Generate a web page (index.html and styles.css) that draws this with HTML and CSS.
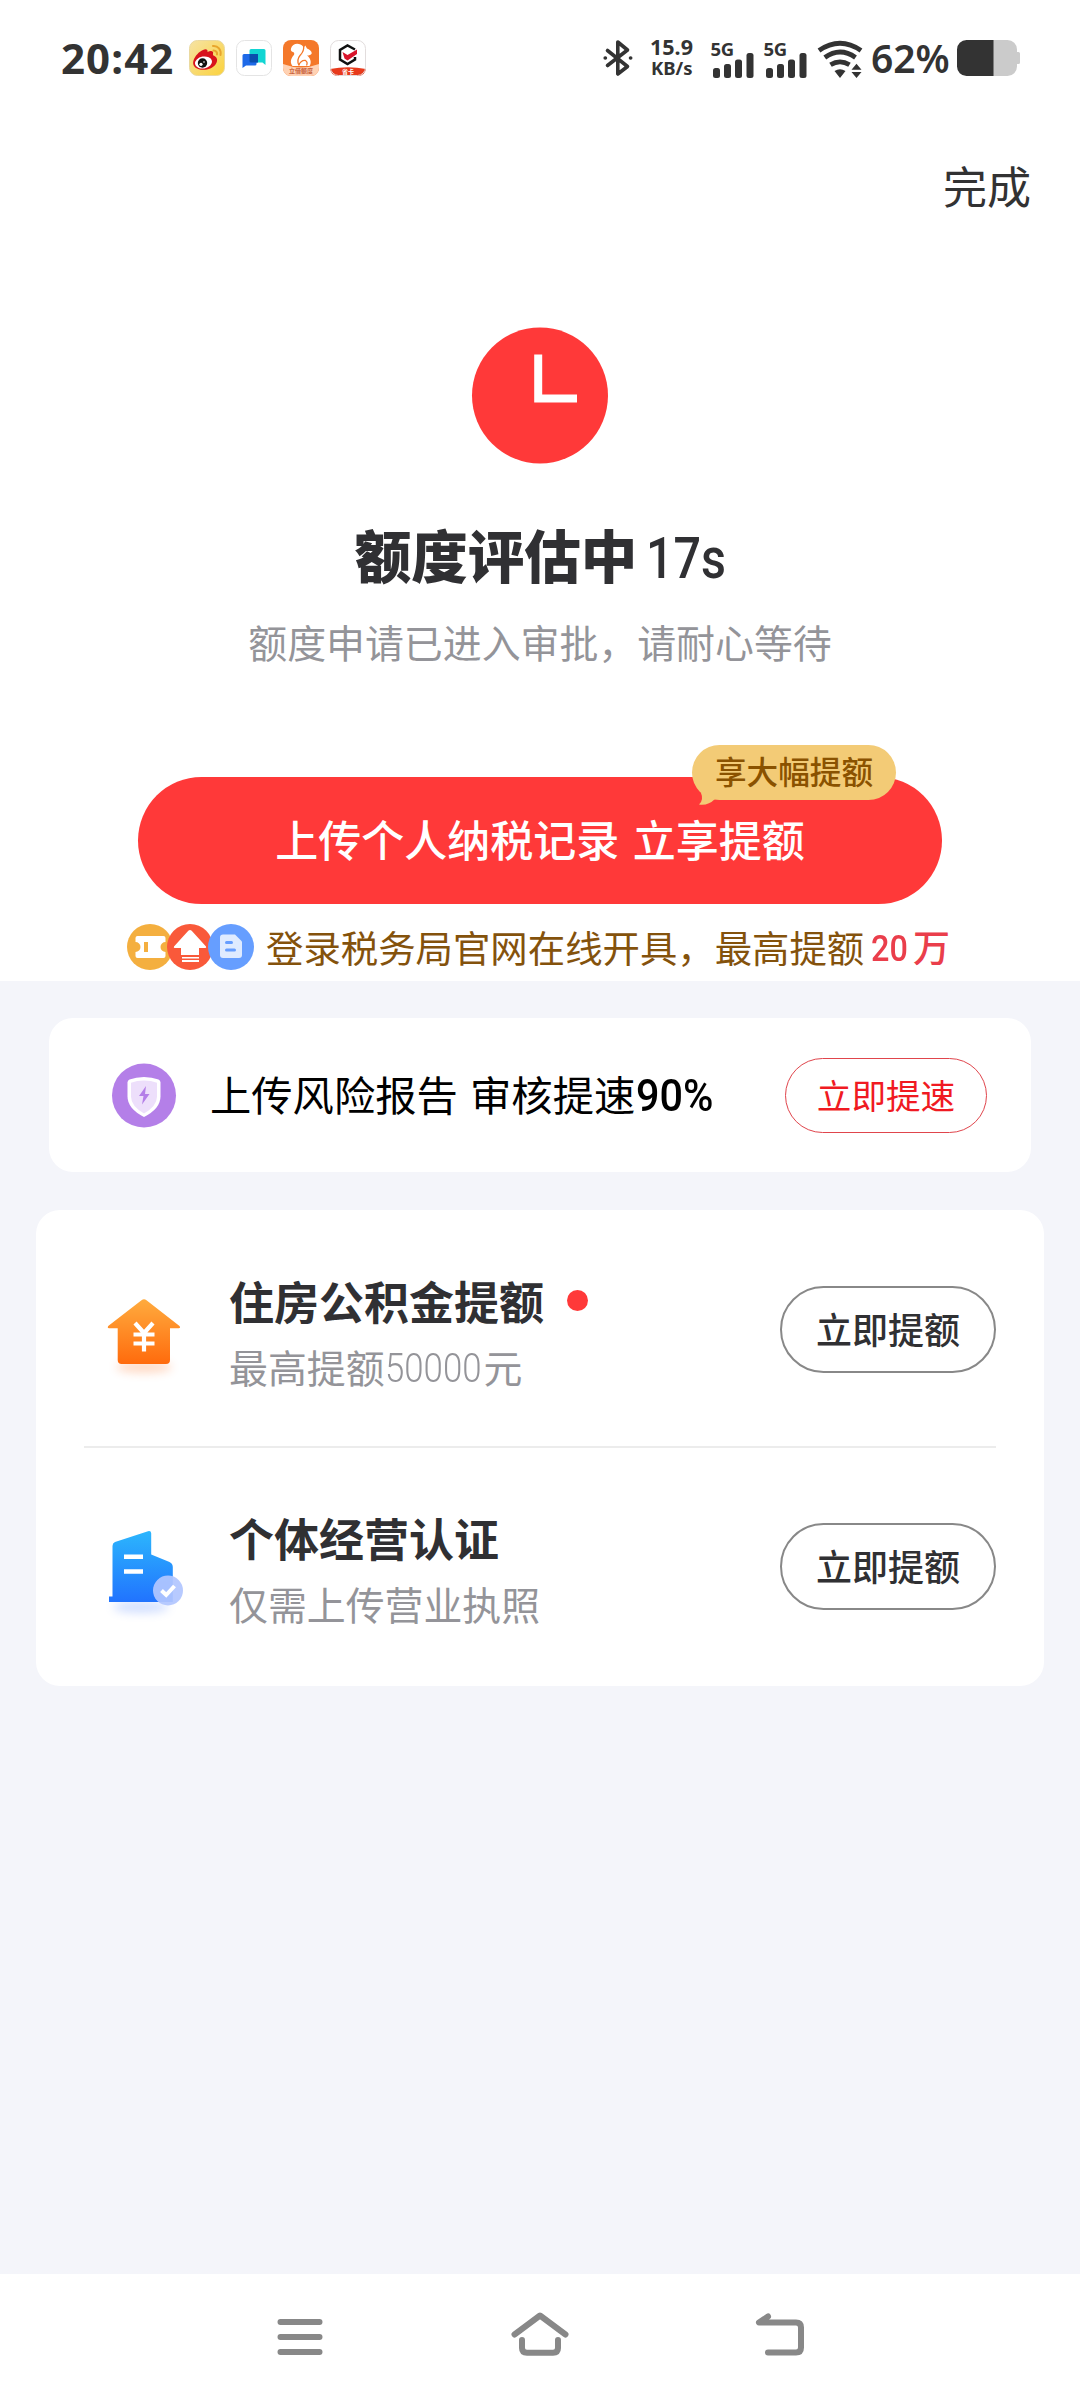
FILE: index.html
```html
<!DOCTYPE html>
<html lang="zh-CN">
<head>
<meta charset="utf-8">
<title>额度评估</title>
<link rel="stylesheet" href="styles.css">
</head>
<body>
<div class="screen">
  <header class="status">
    <div class="status-left">
      <span class="time">20:42</span>
      <svg class="app" viewBox="0 0 36 36">
        <defs><linearGradient id="wb" x1="0" y1="0" x2="1" y2="1"><stop offset="0" stop-color="#f6e3a4"/><stop offset="1" stop-color="#fbd23c"/></linearGradient></defs>
        <rect x=".5" y=".5" width="35" height="35" rx="8" fill="url(#wb)" stroke="#ead9a0"/>
        <path d="M14 10c3-1.500 5-.5 4.500 2 3-1.500 6.500-1.500 5.500 2-.3 1.200.5 1.500 1.500 2 3 1.500 3.500 5 1 8.500-3 4-9 6-14.500 5.200C6 29 3 25 4.500 20.500 6 16 10 11.500 14 10z" fill="#d8121c"/>
        <ellipse cx="14.500" cy="22.500" rx="8.600" ry="6" transform="rotate(-10 14.500 22.500)" fill="#fff"/>
        <circle cx="13.500" cy="23" r="4.700" fill="#111"/><circle cx="12" cy="24.300" r="1.600" fill="#fff"/><circle cx="15" cy="22" r=".8" fill="#fff"/>
        <path d="M24 6c5-.5 8.500 4 7.500 9M24.500 10.500c2.500 0 4 2 3.500 4" fill="none" stroke="#e8a52c" stroke-width="2" stroke-linecap="round"/>
      </svg>
      <svg class="app" viewBox="0 0 36 36">
        <rect x=".5" y=".5" width="35" height="35" rx="8" fill="#fff" stroke="#e4e4e4"/>
        <path d="M15 9h13a1.500 1.500 0 0 1 1.500 1.500V25l-3-2.500H15a1.500 1.500 0 0 1-1.500-1.500V10.500A1.500 1.500 0 0 1 15 9z" fill="#12d5d3"/>
        <path d="M8 14h14v7a1.500 1.500 0 0 1-1.500 1.500V24a1.500 1.500 0 0 1-1.500 1.500H10l-3.500 2.500V15.500A1.500 1.500 0 0 1 8 14z" fill="#1e6ae8"/>
        <path d="M13.500 14H22v8.500h-7a1.500 1.500 0 0 1-1.500-1.500z" fill="#0a4fae"/>
      </svg>
      <svg class="app" viewBox="0 0 36 36">
        <defs><clipPath id="ac"><rect width="36" height="36" rx="8"/></clipPath></defs>
        <g clip-path="url(#ac)"><rect width="36" height="36" fill="#f4782a"/>
        <path d="M0 24q18 7 36 0v12H0z" fill="#ffd2b4"/>
        <path d="M8 8.500C9 4 14 2.800 17.500 4.500c4 2 5 6 2.500 9.500-2 3-4 4.500-3.500 8 .2 1.800 1 3 2.500 4H9.500c-2.500-3-2-7 1-10.500 1.200-1.500 1-3-.5-3.500-1.800-.5-2.500-2-2-3.500z" fill="#fff"/>
        <path d="M20 8.500l2.300-3 1.700 3c3 1 5 3 4.700 5-.7 1.500-2.700 2-4.700 2 3.500 2.500 5 7 2.500 10.500H15c-1-3.500.5-7.500 3-10 2.500-2 1.500-5 2-7.500z" fill="#fff"/>
        <path d="M20.500 5c.8 4-.5 7.500-3.500 10.500-2.500 3-3 6-1 10M16 25.500c0-3 3.500-5.500 6.500-5 1.500 1 2 3 1 5" fill="none" stroke="#f4782a" stroke-width="1.300"/></g>
        <text x="18" y="33" class="tiny" fill="#c8603a">立借额度</text>
      </svg>
      <svg class="app" viewBox="0 0 36 36">
        <defs><clipPath id="ad"><rect width="36" height="36" rx="8"/></clipPath></defs>
        <g clip-path="url(#ad)"><rect width="36" height="36" fill="#fff"/><path d="M0 29q18-3.500 36 0v7H0z" fill="#e83a1c"/></g>
        <rect x=".5" y=".5" width="35" height="35" rx="8" fill="none" stroke="#e2dddd"/>
        <path d="M25 9.500L17.500 5.500 10 10v9.500l7.500 4.500 7.500-4.500V17" fill="none" stroke="#111" stroke-width="2.500"/>
        <path d="M12.500 12l5 3L27 9.500V14l-9.500 6.500-3-2z" fill="#d9142b"/>
        <text x="18" y="34.200" class="tiny" fill="#fff">省卡</text>
      </svg>
    </div>
    <div class="status-right">
      <svg class="bt" width="30" height="36" viewBox="0 0 30 36" fill="none" stroke="#333" stroke-width="3.600" stroke-linejoin="round" stroke-linecap="round"><path d="M4.500 10.500L24.500 26.500 14.800 34V2l9.700 8L4.500 25.500"/><path d="M2.200 18h.2M27.500 18h.2"/></svg>
      <div class="speed"><span class="num">15.9</span><span class="unit">KB/s</span></div>
      <svg class="sig" width="43" height="37" viewBox="0 0 43 37" fill="#333"><text x="-.5" y="15" class="g5">5G</text><rect x="2" y="27" width="7" height="10" rx="2.500"/><rect x="13" y="23" width="7" height="14" rx="2.500"/><rect x="24" y="18.500" width="7" height="18.500" rx="2.500"/><rect x="35.500" y="12" width="7" height="25" rx="2.500"/></svg>
      <svg class="sig sig2" width="43" height="37" viewBox="0 0 43 37" fill="#333"><text x="-.5" y="15" class="g5">5G</text><rect x="2" y="27" width="7" height="10" rx="2.500"/><rect x="13" y="23" width="7" height="14" rx="2.500"/><rect x="24" y="18.500" width="7" height="18.500" rx="2.500"/><rect x="35.500" y="12" width="7" height="25" rx="2.500"/></svg>
      <svg class="wifi" width="45" height="37" viewBox="0 0 45 37"><g fill="none" stroke="#333" stroke-width="4.800"><path d="M1 9.500Q22 -5 43 9.500"/><path d="M6.800 16.500Q22 5.500 37.500 16.500"/><path d="M12.500 23.800Q22 18 31.500 23.800"/></g><path d="M16.500 30q5.500-3.500 11 0l-5.500 7zM38.500 22.800l5 6h-10zM38.500 37l5-6h-10z" fill="#333"/></svg>
      <span class="pct">62%</span>
      <svg class="bat" width="63" height="36" viewBox="0 0 63 36"><path d="M36 0h14.500a9.500 9.500 0 0 1 9.500 9.500V12h1.500a1.500 1.500 0 0 1 1.500 1.500v9a1.500 1.500 0 0 1-1.500 1.500H60v2.500a9.500 9.500 0 0 1-9.500 9.500H36z" fill="#cbcbcb"/><path d="M36.500 0v36h-27A9.500 9.500 0 0 1 0 26.500v-17A9.500 9.500 0 0 1 9.500 0z" fill="#333"/></svg>
    </div>
  </header>
  <nav class="topbar"><a class="done">完成</a></nav>
  <section class="hero">
    <svg class="clock" width="136" height="136" viewBox="0 0 136 136"><circle cx="68" cy="68.500" r="68" fill="#ff3939"/><path d="M66.200 27.500v44H105" fill="none" stroke="#fff" stroke-width="8"/></svg>
    <h1 class="title">额度评估中<span class="secs">17s</span></h1>
    <p class="subtitle">额度申请已进入审批，请耐心等待</p>
    <button class="cta">上传个人纳税记录 立享提额
      <span class="bubble">享大幅提额<svg class="tail" width="20" height="14" viewBox="0 0 20 14"><path d="M2 0Q5 7 0 11.500Q9 13 16 6V0z" fill="#f3cb76"/></svg></span>
    </button>
    <div class="tip">
      <div class="tip-icons">
        <svg width="46" height="46" viewBox="0 0 46 46"><circle cx="23" cy="23" r="23" fill="#f4af3f"/><path d="M10.500 12h26a2 2 0 0 1 2 2v4a5 5 0 0 0 0 10v4a2 2 0 0 1-2 2h-26a2 2 0 0 1-2-2v-4a5 5 0 0 0 0-10v-4a2 2 0 0 1 2-2z" fill="#fff"/><rect x="17" y="18" width="4" height="10" fill="#f4af3f"/></svg>
        <svg width="46" height="46" viewBox="0 0 46 46"><circle cx="23" cy="23" r="23" fill="#f9593a"/><path d="M21.300 6.800q1.700-1.600 3.400 0L39 22.500q.8 1.500-1 1.500h-6v7H14v-7H8q-1.800 0-1-1.500zM15 33h17v1.500H15zM15 36h17v2H15z" fill="#fff"/></svg>
        <svg width="46" height="46" viewBox="0 0 46 46"><circle cx="23" cy="23" r="23" fill="#669eff"/><path d="M15 10.500h12l7 7V31a3 3 0 0 1-3 3H15a3 3 0 0 1-3-3V13.500a3 3 0 0 1 3-3z" fill="#dfebff"/><path d="M18.500 18.500h5M18.500 26h8" stroke="#669eff" stroke-width="3" stroke-linecap="round"/></svg>
      </div>
      <span class="tip-text">登录税务局官网在线开具，最高提额</span><span class="amount">20</span><span class="wan">万</span>
    </div>
  </section>
  <main class="cards">
    <section class="card speedup">
      <svg class="shield" width="64" height="64" viewBox="0 0 64 64"><circle cx="32" cy="32.500" r="32" fill="#b47fe8"/><path d="M32 14q8 0 14.500 2.500 2 .8 2 3V33.500q0 12-16.500 20.500Q15.500 45.500 15.500 33.500V19.500q0-2.200 2-3Q24 14 32 14z" fill="#fff"/><path d="M32 17.500q7 0 13 2.200V33.500q0 9.500-13 17-13-7.500-13-17V19.700Q25 17.500 32 17.500z" fill="#eddffb"/><path d="M34 23l-7 10h4.500L30 41.500 37.500 31H33z" fill="#b47fe8"/></svg>
      <span class="speedup-text">上传风险报告 审核提速<span class="ninety">90%</span></span>
      <button class="pill red">立即提速</button>
    </section>
    <section class="card list">
      <div class="row">
        <svg class="ico" width="90" height="90" viewBox="0 0 90 90">
          <defs><linearGradient id="or" x1="0" y1="0" x2="0" y2="1"><stop offset="0" stop-color="#ffab3e"/><stop offset="1" stop-color="#ff6b0d"/></linearGradient><filter id="bl" x="-30%" y="-80%" width="160%" height="260%"><feGaussianBlur stdDeviation="5"/></filter></defs>
          <ellipse cx="45" cy="76" rx="28" ry="6" fill="#ff7a30" opacity=".28" filter="url(#bl)"/>
          <path d="M42.500 9.300q2.500-2 5 0L80.500 35q1.500 2-.8 2.300H71V69q0 4-4 4H22.700q-4 0-4-4V37.300H10q-2-.3-.8-2.300z" fill="url(#or)"/>
          <path d="M36 32l9 10 9-10M34.500 43.500h21M34.500 52.500h21M45 42v18.500" fill="none" stroke="#fff" stroke-width="4.200"/>
        </svg>
        <div class="info"><div class="name">住房公积金提额<i class="dot"></i></div><div class="desc">最高提额<span class="thin">50000</span>元</div></div>
        <button class="pill">立即提额</button>
      </div>
      <div class="row">
        <svg class="ico" width="90" height="90" viewBox="0 0 90 90">
          <defs><linearGradient id="bu" x1="0" y1="0" x2="0" y2="1"><stop offset="0" stop-color="#2cb6fd"/><stop offset="1" stop-color="#2173fe"/></linearGradient></defs>
          <ellipse cx="42" cy="79" rx="28" ry="6" fill="#4d80ff" opacity=".25" filter="url(#bl)"/>
          <path d="M13.500 68.500V18q0-3 2.500-4L49 3.200q3-.7 3.200 2V26.500L70.500 34q3.300 1.700 3.300 5V74H10v-5.500z" fill="url(#bu)"/>
          <path d="M25 28.700h19M25 43.600h19" stroke="#fff" stroke-width="4.500"/>
          <circle cx="69" cy="62.500" r="15" fill="#b2c6ff" opacity=".93"/><path d="M62.500 62.500l4.700 4.500 8.300-9" fill="none" stroke="#fff" stroke-width="4"/>
        </svg>
        <div class="info"><div class="name">个体经营认证</div><div class="desc">仅需上传营业执照</div></div>
        <button class="pill">立即提额</button>
      </div>
    </section>
  </main>
  <footer class="navbar">
    <svg width="60" height="44" viewBox="0 0 60 44"><path d="M10.500 10h39M10.500 25h39M10.500 40h39" stroke="#888" stroke-width="6" stroke-linecap="round" fill="none"/></svg>
    <svg width="60" height="44" viewBox="0 0 60 44"><path d="M4.500 22.500L30 3.500 55.500 22.500M12 28v8q0 4.700 5 4.700h26q5 0 5-4.700v-8" stroke="#888" stroke-width="6" stroke-linecap="round" stroke-linejoin="round" fill="none"/></svg>
    <svg width="60" height="44" viewBox="0 0 60 44"><path d="M18 4.500L9 10.500h37q5 0 5 5v20q0 5-5 5H18" stroke="#888" stroke-width="6" stroke-linecap="round" stroke-linejoin="round" fill="none"/></svg>
  </footer>
</div>
</body>
</html>
```
FILE: styles.css
```css
* { box-sizing: border-box; margin: 0; padding: 0; }
body { width: 1080px; background: #fff; color: #323233; font-family: "Noto Sans CJK SC", sans-serif; }
button { background: none; border: 0; font: inherit; color: inherit; white-space: nowrap; }
svg { display: block; flex: none; overflow: visible; }
.screen { display: flex; flex-direction: column; width: 1080px; height: 2400px; overflow: hidden; }

.status { display: flex; flex: none; justify-content: space-between; height: 116px; padding: 0 60px; font-family: "Noto Sans", sans-serif; color: #333; }
.status-left, .status-right { display: flex; align-items: center; height: 116px; }
.time { width: 129px; padding-left: 1px; font-size: 42px; font-weight: 700; line-height: 50px; letter-spacing: 1.100px; }
.app { width: 36px; height: 36px; margin-right: 11px; }
.tiny { font: 700 6px "Noto Sans CJK SC", sans-serif; text-anchor: middle; }
.speed { display: flex; flex-direction: column; width: 46px; margin-left: 17px; font-weight: 700; }
.num { font-size: 21.500px; line-height: 20px; }
.unit { padding-left: 1px; font-size: 18.500px; line-height: 22px; }
.sig { margin: 2px 0 0 15px; }
.sig2 { margin-left: 10px; }
.g5 { font: 700 18.500px "Noto Sans", sans-serif; letter-spacing: -.3px; }
.wifi { margin: 2px 8px 0 11px; }
.pct { width: 86px; font-size: 39px; line-height: 48px; font-weight: 600; }

.topbar { display: flex; flex: none; justify-content: flex-end; height: 211px; padding: 37px 49px 0; }
.done { font-size: 44px; line-height: 64px; }

.hero { display: flex; flex: none; flex-direction: column; align-items: center; height: 654px; }
.title { display: flex; align-items: baseline; height: 80px; margin-top: 50px; padding-left: 7px; font-size: 56.500px; line-height: 80px; font-weight: 900; color: #303033; }
.secs { width: 86px; margin-left: 9px; font-family: Roboto, sans-serif; font-size: 57px; line-height: 60px; font-weight: 500; transform: scaleX(.85); transform-origin: left; }
.subtitle { margin-top: 20px; font-size: 38.900px; line-height: 56px; color: #949499; }
.cta { position: relative; flex: none; width: 804px; height: 127px; margin-top: 108px; padding-bottom: 6px; border-radius: 64px; background: #ff3939; color: #fff; font-size: 43px; font-weight: 500; word-spacing: 4px; }
.bubble { position: absolute; left: 554px; top: -32px; width: 204px; height: 55px; border-radius: 28px; background: #f3cb76; color: #8a5200; font-size: 31.600px; line-height: 51px; }
.tail { position: absolute; left: 7px; top: 48px; }
.tip { display: flex; align-items: center; align-self: stretch; height: 46px; margin-top: 20px; padding-left: 127px; color: #84520c; }
.tip-icons { display: flex; width: 139px; }
.tip-icons svg { margin-right: -5.700px; }
.tip-text { width: 605px; font-size: 37.400px; line-height: 50px; margin-top: -1px; }
.amount { width: 42px; font-family: Roboto, sans-serif; font-size: 36px; font-weight: 500; line-height: 50px; margin-top: 3px; color: #ea3e4b; transform: scaleX(.9); transform-origin: left; }
.wan { font-size: 37px; line-height: 50px; margin-top: -2px; color: #ea3e4b; font-weight: 500; }

.cards { display: flex; flex-direction: column; flex: 1; background: #f4f5fa; padding: 37px 36px 0; gap: 38px; }
.card { background: #fff; border-radius: 24px; }
.speedup { display: flex; align-items: center; height: 154px; margin: 0 13px; padding: 0 44px 0 63px; color: #000; }
.speedup-text { flex: 1; margin: -4px 0 0 34px; font-size: 41.300px; line-height: 60px; word-spacing: 3px; white-space: nowrap; }
.ninety { display: inline-block; margin-left: 1px; font: 500 43.500px/50px Roboto, sans-serif; transform: scaleX(.95); transform-origin: left; }
.pill { width: 216px; height: 87px; border: 2px solid #888; border-radius: 44px; font-size: 36px; line-height: 80px; font-weight: 500; color: #303033; padding-bottom: 3px; }
.pill.red { width: 202px; height: 75px; border: 1.500px solid #e0454c; font-size: 34.600px; line-height: 68px; font-weight: 400; color: #f01a22; }
.list { height: 476px; padding: 0 48px; }
.row { display: flex; align-items: center; height: 239px; }
.row:first-child { height: 236px; padding-top: 2px; }
.row + .row { border-top: 2px solid #ececec; }
.ico { margin: 13px 0 0 15px; }
.info { flex: 1; margin: 8px 0 0 40px; }
.name { display: flex; align-items: center; font-size: 45px; line-height: 64px; font-weight: 700; color: #303033; }
.dot { width: 21px; height: 21px; margin-left: 23px; border-radius: 50%; background: #ff3939; }
.desc { display: flex; margin-top: 1px; font-size: 38.900px; line-height: 64px; color: #949499; }
.thin { width: 99px; font-family: Roboto, sans-serif; font-weight: 300; font-size: 40px; line-height: 70px; height: 64px; transform: scaleX(.87); transform-origin: left; }

.navbar { display: flex; flex: none; justify-content: center; gap: 180px; height: 126px; padding-top: 38px; background: #fff; }
```
